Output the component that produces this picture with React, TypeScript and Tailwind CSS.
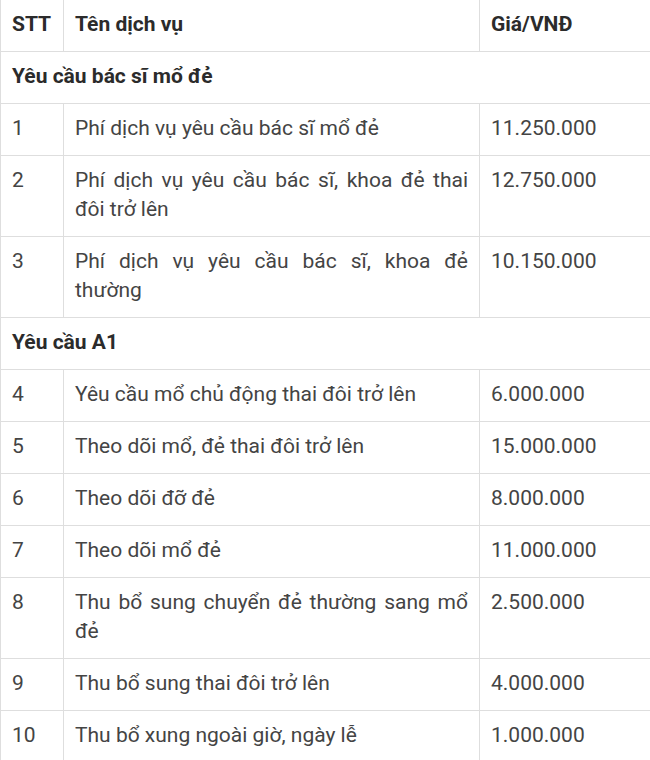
import React from "react";

type Row =
  | { kind: "section"; title: string }
  | { kind: "item"; stt: string; name: string; price: string };

const rows: Row[] = [
  { kind: "section", title: "Yêu cầu bác sĩ mổ đẻ" },
  { kind: "item", stt: "1", name: "Phí dịch vụ yêu cầu bác sĩ mổ đẻ", price: "11.250.000" },
  { kind: "item", stt: "2", name: "Phí dịch vụ yêu cầu bác sĩ, khoa đẻ thai đôi trở lên", price: "12.750.000" },
  { kind: "item", stt: "3", name: "Phí dịch vụ yêu cầu bác sĩ, khoa đẻ thường", price: "10.150.000" },
  { kind: "section", title: "Yêu cầu A1" },
  { kind: "item", stt: "4", name: "Yêu cầu mổ chủ động thai đôi trở lên", price: "6.000.000" },
  { kind: "item", stt: "5", name: "Theo dõi mổ, đẻ thai đôi trở lên", price: "15.000.000" },
  { kind: "item", stt: "6", name: "Theo dõi đỡ đẻ", price: "8.000.000" },
  { kind: "item", stt: "7", name: "Theo dõi mổ đẻ", price: "11.000.000" },
  { kind: "item", stt: "8", name: "Thu bổ sung chuyển đẻ thường sang mổ đẻ", price: "2.500.000" },
  { kind: "item", stt: "9", name: "Thu bổ sung thai đôi trở lên", price: "4.000.000" },
  { kind: "item", stt: "10", name: "Thu bổ xung ngoài giờ, ngày lễ", price: "1.000.000" },
];

const cell = "border border-[#dedede] px-[11px] pt-[10px] pb-[12px] align-top";

export default function App() {
  return (
    <div className="w-[650px] h-[760px] overflow-hidden bg-white">
      <table
        className="border-collapse w-[700px] -mt-px text-[21px] leading-[29px] text-[#444444] [font-family:Roboto,'Noto_Sans',sans-serif]"
        style={{ tableLayout: "fixed" }}
      >
        <colgroup>
          <col className="w-[63px]" />
          <col className="w-[416px]" />
          <col className="w-[221px]" />
        </colgroup>
        <thead>
          <tr>
            <th className={`${cell} text-left font-bold text-[#2b2b2b]`}>STT</th>
            <th className={`${cell} text-left font-bold text-[#2b2b2b]`}>Tên dịch vụ</th>
            <th className={`${cell} text-left font-bold text-[#2b2b2b]`}>Giá/VNĐ</th>
          </tr>
        </thead>
        <tbody>
          {rows.map((r, i) =>
            r.kind === "section" ? (
              <tr key={i}>
                <td colSpan={3} className={`${cell} font-bold text-[#2b2b2b]`}>
                  {r.title}
                </td>
              </tr>
            ) : (
              <tr key={i}>
                <td className={cell}>{r.stt}</td>
                <td className={`${cell} text-justify`}>{r.name}</td>
                <td className={cell}>{r.price}</td>
              </tr>
            )
          )}
        </tbody>
      </table>
    </div>
  );
}
